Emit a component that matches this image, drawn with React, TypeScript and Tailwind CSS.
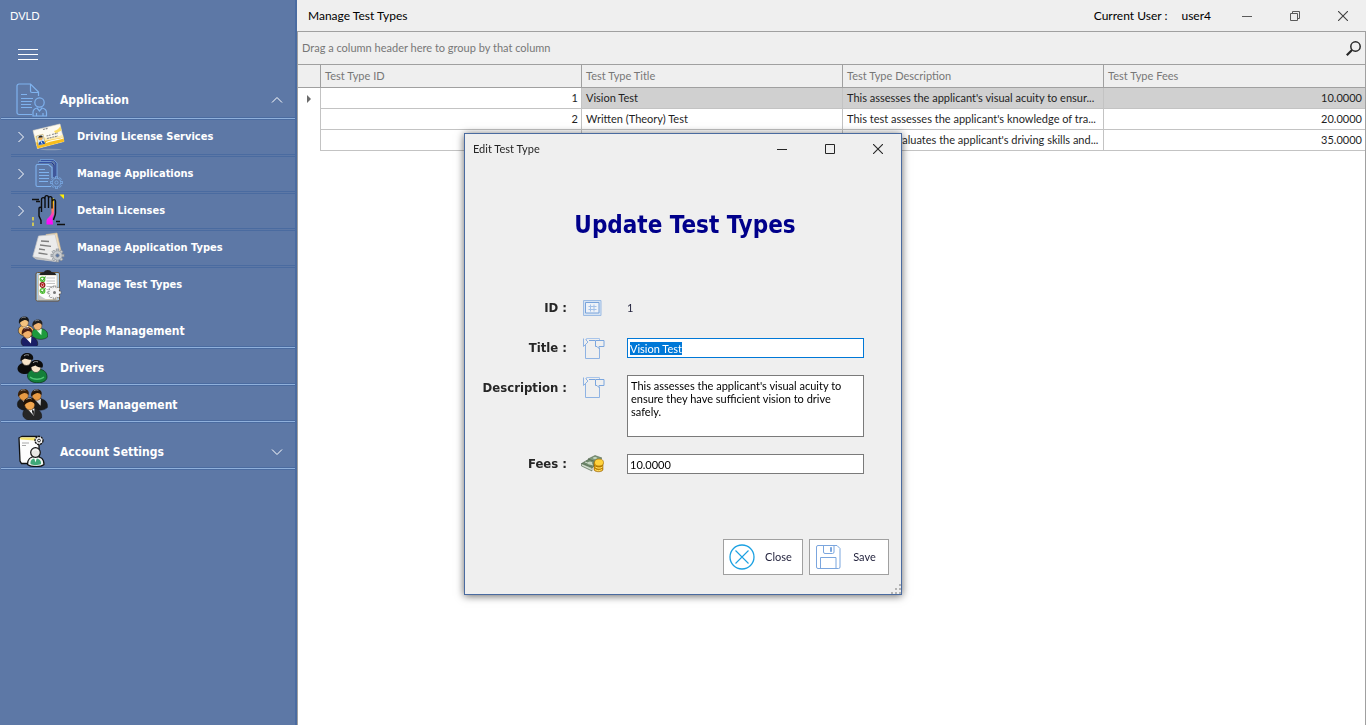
import { useEffect, useRef, useState } from "react";
import type { ReactNode } from "react";

/* ---------- sidebar icons ---------- */

function ApplicationIcon() {
  return (
    <svg width="32" height="34" viewBox="0 0 32 34" fill="none" stroke="#7fb2ee" strokeWidth="1.2">
      <path d="M16 31.500H3a2 2 0 0 1-2-2V3a2 2 0 0 1 2-2H14.500l8 8v4" />
      <path d="M14.500 1V8A1.500 1.500 0 0 0 16 9.500H22.500" />
      <path d="M5 11.500h6M5 15.500h12M5 18.500h11M5 21.500h10M5 24.500h11" />
      <circle cx="23.500" cy="19.500" r="4.700" />
      <path d="M17 33v-3.500c0-2.500 2-4 4-4.500l2.500 3 2.500-3c2.500.500 4.500 2 4.500 4.500V33z" />
      <path d="M20.500 30v3M27 30v3" />
    </svg>
  );
}

function LicenseCardIcon() {
  return (
    <svg width="34" height="30" viewBox="0 0 34 30">
      <ellipse cx="19" cy="27.500" rx="11" ry=".8" fill="#8b9bb8" />
      <path d="M1 8.500 28 2l4 17.500L5.500 26.500z" fill="#fdfaf0" stroke="#e3dccb" strokeWidth=".6" />
      <path d="M22 9c3-.8 5-2.500 6.500-5l1 4.500-6 3z" fill="#fbdb62" />
      <path d="M2.500 13.500c8 3 20 3 28.500-1l1 7L5.500 26.500z" fill="#fdebb0" />
      <path d="m4.200 20.500 27.200-5 .8 4L5.500 26.500z" fill="#f8bd1c" />
      <path d="M14 20.500c6-2.500 12-2.500 17.300-4.500" stroke="#fffbe8" strokeWidth="1.200" fill="none" />
      <path d="m4.500 14 6.500-1.700 2.300 9.500-6.800 2z" fill="#d6ecff" stroke="#caa24a" strokeWidth=".6" />
      <circle cx="8.500" cy="16.300" r="2.200" fill="#f0b55e" />
      <path d="M6.300 15.800c.3-2.600 4-3 4.600-.6z" fill="#2b2620" />
      <path d="M6.600 23c0-3 1.200-4 3-4.300 2-.2 3 1 3.500 3z" fill="#1e4fa9" />
      <path d="m8.800 18.800 1.400 3" stroke="#fff" strokeWidth=".9" />
      <path d="m11 7.500 5-1.200M14.500 14l4-1M20 12.500l6-1.500M15 16.500l11-2.600" stroke="#8b8b8b" strokeWidth="1.100" strokeDasharray="2 .7" />
    </svg>
  );
}

function Gear({ cx, cy, r, fill, stroke }: { cx: number; cy: number; r: number; fill: string; stroke: string }) {
  const spokes = [0, 45, 90, 135, 180, 225, 270, 315];
  return (
    <g transform={`translate(${cx} ${cy})`}>
      {spokes.map((a) => (
        <rect key={a} x={-r * 0.2} y={-r} width={r * 0.4} height={r * 0.5} fill={fill} stroke={stroke} strokeWidth=".7" transform={`rotate(${a})`} />
      ))}
      <circle r={r * 0.72} fill={fill} stroke={stroke} strokeWidth=".6" />
      <circle r={r * 0.27} fill="#5d78a6" stroke={stroke} strokeWidth=".7" />
    </g>
  );
}

function DocumentsGearIcon() {
  return (
    <svg width="28" height="30" viewBox="0 0 28 30" fill="none">
      <path d="M6 1.500h12.500l2.500 2.500v14M4 3.500h12.500l2.500 2.500V18" stroke="#22368f" strokeWidth="1" />
      <path d="M5 .8h13.500l3.500 3.500V17M3 2.800h13.500" stroke="#7fb2ee" strokeWidth=".8" />
      <path d="M16 27.500H2.500A1.500 1.500 0 0 1 1 26V7a1.500 1.500 0 0 1 1.500-1.500h11l3.500 3V19" stroke="#7fb2ee" strokeWidth="1.100" />
      <path d="M4 10.500h6M4 13.500h10M4 16.500h10M4 19.500h10M4 22.500h9" stroke="#7fb2ee" />
      <Gear cx={21.5} cy={23.500} r={5.800} fill="#5d78a6" stroke="#7fb2ee" />
    </svg>
  );
}

function HandIcon() {
  return (
    <svg width="34" height="34" viewBox="0 0 34 34" fill="none">
      <defs>
        <linearGradient id="palm" x1="0" y1="4" x2="0" y2="31" gradientUnits="userSpaceOnUse">
          <stop offset="0" stopColor="#ffe600" />
          <stop offset=".4" stopColor="#ff8a4a" />
          <stop offset=".75" stopColor="#f81ff0" />
          <stop offset="1" stopColor="#ff00ff" />
        </linearGradient>
      </defs>
      <path d="M19.500 4.500h2.500v16l-1.500 3.500.5 6.500h-6.500v-3.500c0-3 4-4 5-8z" fill="url(#palm)" />
      <path
        d="M9 30v-3.500L7 22v-7.500c0-1.700 2.500-1.700 2.500 0V18 5.500c0-2.500 3.500-2.500 3.500 0V14 3.500c0-2.500 3.500-2.500 3.500 0V14 4.500c0-2.500 3.500-2.500 3.500 0V14.500M20.500 7c.5-2 3-1.800 3 .5V19c0 3-1.500 4.500-2 7"
        stroke="#0c0c0c"
        strokeWidth="1.400"
      />
      <path d="M0 5.500h7M4 7.500h4M24 27.500h4M25 30.500h8" stroke="#111" strokeWidth="1.400" />
      <path d="M27.500.5h4.500v4.500z" fill="#ffee00" />
      <path d="M1 23v3.500M1 28.500V32" stroke="#e8d84a" strokeWidth="1.600" />
    </svg>
  );
}

function PapersGearIcon() {
  return (
    <svg width="34" height="32" viewBox="0 0 34 32">
      <path d="M14 2.500 25 1l4.500 20L15 27z" fill="#f4dcb4" stroke="#d4bd95" strokeWidth=".6" />
      <path d="M6.500 4 23 2.500l4.500 18c0 3-2 8-4 9L4 27 .8 24.500z" fill="#ebebeb" stroke="#c6c6c6" strokeWidth=".7" />
      <path d="M.8 24.500c4 .5 15 1.500 22.500 5L4 27z" fill="#bdbdbd" />
      <path d="m9 9 8 .5M8 13l11 1.300M7 17l6 .8M6.500 21l9 1.300" stroke="#7d7d7d" strokeWidth="1.300" />
      <Gear cx={25.500} cy={23.500} r={6.500} fill="#c8ccd0" stroke="#8b9096" />
    </svg>
  );
}

function ClipboardGearIcon() {
  return (
    <svg width="28" height="33" viewBox="0 0 28 33">
      <rect x="1" y="3.500" width="23.500" height="28.500" rx="1.500" fill="#a9cce8" stroke="#6b5236" strokeWidth="1" />
      <rect x="3.500" y="6" width="18.500" height="24.500" fill="#fdfdfd" stroke="#cbb083" strokeWidth=".6" />
      <path d="M4.500 6C4.500 3.500 8 3.500 9 3c1-2.800 6.500-2.800 7.500 0 1 .5 4.500.5 4.500 3z" fill="#222" />
      {[10.5, 16, 22].map((y, i) => (
        <g key={y}>
          <circle cx="7.500" cy={y} r="2.300" fill="#fff" stroke={i === 1 ? "#8e1616" : "#55c234"} strokeWidth="1.200" />
          <path d={i === 1 ? `m6.500 ${y - 1} 2 2m0-2-2 2` : `m6 ${y} 1.500 1.500 3-4.500`} stroke={i === 1 ? "#c01818" : "#3ea92e"} strokeWidth="1.100" fill="none" />
          <path d={`M11.500 ${y - 1.5}h8.500M11.500 ${y + 1.5}h8.500`} stroke="#c4c4c4" />
        </g>
      ))}
      <path d="M3.500 25.500c2 2 5 3 8 5h-8z" fill="#c9c9c9" />
      <g transform="translate(19.500 23.500)">
        {[0, 45, 90, 135].map((a) => (
          <rect key={a} x="-1.400" y="-6.500" width="2.800" height="13" fill="#f4f4f4" stroke="#555" strokeWidth=".5" transform={`rotate(${a})`} />
        ))}
        <circle r="4.800" fill="#f4f4f4" />
        <circle r="1.500" fill="#777" />
      </g>
    </svg>
  );
}

type PersonProps = { x: number; y: number; s: number; skin: string; hair: string; body: string; shirt: string };

function Person({ x, y, s, skin, hair, body, shirt }: PersonProps) {
  return (
    <g transform={`translate(${x} ${y}) scale(${s})`}>
      <path d="M-6 13C-8 8-5 5-2 4h6c5 1 9 4 8 10-4 4-14 4-18-1z" fill={body} stroke="#161616" strokeWidth=".6" />
      <path d="m-2 5 7-.5L4.500 12z" fill={shirt} />
      <ellipse cx="0" cy="0.500" rx="5" ry="5.500" fill={skin} stroke="#5c3a1a" strokeWidth=".5" transform="rotate(-15)" />
      <path d="M-5.800 2C-7-4-3-6.800 1-6.500 5-6.200 6.500-3 5.500 0 4-1.500 2-2.800 0-2c-2 .8-4 1.500-5.800 4z" fill={hair} />
      <path d="M-3-4.500C-1.500-6 1-5.800 2-5" stroke="#fff" strokeOpacity=".55" strokeWidth="1" fill="none" />
    </g>
  );
}

function PeopleIcon() {
  return (
    <svg width="32" height="32" viewBox="0 0 32 32">
      <Person x={8} y={7} s={0.85} skin="#f4c27e" hair="#171717" body="#f0b763" shirt="#fff8e6" />
      <Person x={21.500} y={10} s={0.85} skin="#f2b574" hair="#22201e" body="#1d9a3d" shirt="#d9ffe0" />
      <Person x={11} y={18} s={0.88} skin="#f0b06c" hair="#4a1d12" body="#1b1f66" shirt="#ffffff" />
    </svg>
  );
}

function DriversIcon() {
  return (
    <svg width="32" height="32" viewBox="0 0 32 32">
      <path d="M1.500 17c0-4 4-6.500 8-6.500s8 3 8 8c-4 5-15 5-16-1.500z" fill="#0b0b0b" />
      <ellipse cx="10.500" cy="8" rx="5" ry="5.500" fill="#f6e3c8" stroke="#222" strokeWidth=".6" />
      <path d="M4.500 9C4 3 8 .5 12 1c4 .5 6 3.500 5 6.500-4 1-8-1-8-1z" fill="#0d0d0d" />
      <path d="M11.500 24c0-4 3.500-7 9.500-7 6.500 0 10 3 10 8 0 8-19 8-19.500-1z" fill="#14803a" stroke="#082f14" strokeWidth=".7" />
      <ellipse cx="20" cy="15" rx="5" ry="5.500" fill="#f6e3c8" stroke="#222" strokeWidth=".6" />
      <path d="M14 15.500C13 10 17 7.500 21 8c5 .5 7 4 5.500 7.500-4 .5-7-2-7-2z" fill="#0b0b0b" />
      <path d="M8 4c1.500-1.500 3.500-1.500 5-.8M17 10.800c1.500-1.500 3.500-1.500 5-.8" stroke="#9a9a9a" fill="none" />
      <path d="M14 25c3 3 11 3 14 0" stroke="#4fc474" strokeWidth="1.300" fill="none" />
    </svg>
  );
}

function UsersIcon() {
  return (
    <svg width="32" height="33" viewBox="0 0 32 33">
      <Person x={20.500} y={7} s={0.9} skin="#e89a43" hair="#241608" body="#1b1b1b" shirt="#cfcfcf" />
      <Person x={7.500} y={7} s={0.92} skin="#e89a43" hair="#3a2008" body="#1b1b1b" shirt="#e8e8e8" />
      <Person x={13.500} y={16} s={1} skin="#f0a64f" hair="#241304" body="#262626" shirt="#f3f3f3" />
      <path d="m16.500 21 1.500 2.500-.5 4.500-1.500-4.500z" fill="#111" />
    </svg>
  );
}

function AccountIcon() {
  return (
    <svg width="28" height="33" viewBox="0 0 28 33">
      <path d="M1 3 4 1.500h17v22l-2 5H3.500L2 26z" fill="#fdfdfd" stroke="#111" strokeWidth="1.300" />
      <path d="M2 2.500h15v3L2.500 4.500z" fill="#f4e36b" />
      <path d="M4 8h7M4 10.500h4" stroke="#a8a8a8" />
      <circle cx="21" cy="5.500" r="4" fill="#f5f5f5" stroke="#111" strokeWidth="1.300" strokeDasharray="2.200 .7" />
      <circle cx="21" cy="5.500" r="1.400" fill="#fff" stroke="#111" strokeWidth=".9" />
      <path d="M9.500 29.500c0-6 3-8 8-8s8.500 2 8.500 8c-3 2.800-13 2.800-16.500 0z" fill="#eef4f0" stroke="#111" strokeWidth="1.200" />
      <path d="M12.500 29c-.5-4 2-5.500 5-5.500s6 1.500 5.500 5.500c-3 1.500-8 1.500-10.500 0z" fill="#3fa878" />
      <path d="m16 22.500 1.500 5 1.500-5z" fill="#fff" />
      <circle cx="17.500" cy="17.500" r="4.800" fill="#e8e8e4" stroke="#111" strokeWidth="1.200" />
      <path d="M14.500 16.500c1-2 4-2.500 5.500-.5" stroke="#fff" fill="none" />
    </svg>
  );
}

/* ---------- form icons ---------- */

function IdIcon() {
  return (
    <svg width="20" height="16" viewBox="0 0 20 16" fill="none">
      <path d="M.5.500h17.500v15H.5z" fill="#d6e3f3" stroke="#9dbce4" />
      <path d="M2.500 2.500h13.500v10.500h-13.500z" fill="#eef2f8" stroke="#78a3da" />
      <path d="M7.500 4.500v7M11 4.500v7M5.500 6.500h8M5.500 9.500h8" stroke="#a3c1e8" />
    </svg>
  );
}

function TextTagIcon() {
  return (
    <svg width="22" height="22" viewBox="0 0 22 22" fill="none" stroke="#7ba6de" strokeWidth="1">
      <path d="M3.500 3.500V1.500h13v2" stroke="#a9c5ea" />
      <path d="M.5 1.500v8L3 7l2-2-2.500-2.500" stroke="#8fb3e3" />
      <path d="M2.500 8v13.500h14V11" stroke="#8fb3e3" />
      <path d="M6 3.500h6" />
      <path d="M12.500 3.500h8.500v6h-5v2l-2-2h-1.500z" fill="#efefef" />
    </svg>
  );
}

function MoneyIcon() {
  return (
    <svg width="24" height="20" viewBox="0 0 24 20">
      <path d="M.5 9.500 8 5l10 3-7 6z" fill="#6f8a6c" stroke="#42573f" strokeWidth=".5" />
      <path d="M.5 9.500v2.500l10.500 5v-3.500z" fill="#a9bba5" stroke="#42573f" strokeWidth=".5" />
      <path d="m7 5 7-3.500L21 4l-5 4z" fill="#7f9a7b" stroke="#42573f" strokeWidth=".5" />
      <path d="m1 11 10 4.500M4 8l8 3" stroke="#e7ede5" strokeWidth=".8" />
      <ellipse cx="9" cy="9" rx="2.500" ry="1.500" fill="#c6d6c1" />
      <ellipse cx="14" cy="4" rx="2" ry="1" fill="#c6d6c1" />
      {[16.5, 14, 11.5].map((y) => (
        <path key={y} d={`M13 ${y - 3}v2c0 3 9 3 9 0v-2z`} fill="#d99a0c" stroke="#8a5a00" strokeWidth=".5" />
      ))}
      <ellipse cx="18" cy="8.500" rx="4.500" ry="3.500" fill="#ffd23c" stroke="#a36d00" strokeWidth=".6" />
      <path d="M14.500 13c2 1.500 5 1.500 7 0M14 15.500c2 1.500 5 1.500 7 0" stroke="#ffe06a" fill="none" />
    </svg>
  );
}

/* ---------- window glyphs ---------- */

function CloseGlyph() {
  return (
    <svg width="10" height="10" viewBox="0 0 10 10" stroke="currentColor" strokeWidth="1.100">
      <path d="m0 0 10 10M10 0 0 10" />
    </svg>
  );
}

function MinimizeGlyph() {
  return (
    <svg width="10" height="10" viewBox="0 0 10 10" stroke="currentColor">
      <path d="M0 5.500h10" />
    </svg>
  );
}

function MaximizeGlyph() {
  return (
    <svg width="10" height="10" viewBox="0 0 10 10" fill="none" stroke="currentColor">
      <path d="M.5.500h9v9h-9z" />
    </svg>
  );
}

function RestoreGlyph() {
  return (
    <svg width="10" height="10" viewBox="0 0 10 10" fill="none" stroke="currentColor">
      <path d="M.5 2.500h7v7h-7zM2.500 2.500v-2h7v7h-2" />
    </svg>
  );
}

function Chevron({ dir }: { dir: "up" | "down" | "right" }) {
  const path = dir === "up" ? "m1 8.500 5-5 5 5" : dir === "down" ? "m1 3.500 5 5 5-5" : "m3.500 1 5 5-5 5";
  return (
    <svg width="12" height="12" viewBox="0 0 12 12" fill="none" stroke="#fff">
      <path d={path} />
    </svg>
  );
}

/* ---------- sidebar ---------- */

const boldFace = "font-['DejaVu_Sans_Condensed','DejaVu_Sans',sans-serif] font-bold";

function SubItem({ icon, label, expandable, last }: { icon: ReactNode; label: string; expandable?: boolean; last?: boolean }) {
  return (
    <li className="flex h-[37px] flex-col">
      <button className="flex min-h-0 flex-1 items-center pl-[15px] text-left">
        <span className="w-4 shrink-0">{expandable && <Chevron dir="right" />}</span>
        <span className="flex w-[36px] shrink-0 justify-center">{icon}</span>
        <span className={`${boldFace} pt-px pl-[10px] text-[11px] text-white`}>{label}</span>
      </button>
      <span className={last ? "h-[3px]" : "ml-[11px] h-[3px] border-y border-[#4a6ba0]"} />
    </li>
  );
}

function MainItem({ icon, label, chevron }: { icon: ReactNode; label: string; chevron?: "up" | "down" }) {
  return (
    <div className="flex h-[37px] flex-col">
      <button className="flex min-h-0 flex-1 items-center pr-3 pl-[14px] text-left">
        <span className="flex w-9 shrink-0 justify-center">{icon}</span>
        <span className={`${boldFace} flex-1 pl-[10px] text-[12px] text-white`}>{label}</span>
        {chevron && <Chevron dir={chevron} />}
      </button>
      <span className="ml-px h-[3px] border-y border-[#4a6ba0] bg-[#8fb0dc]" />
    </div>
  );
}

function GroupItem({ icon, label, chevron }: { icon: ReactNode; label: string; chevron?: "up" | "down" }) {
  return (
    <div className="flex h-[37px] flex-col">
      <button className="flex min-h-0 flex-1 items-center pt-[3px] pr-3 pl-[14px] text-left">
        <span className="flex w-9 shrink-0 justify-center">{icon}</span>
        <span className={`${boldFace} flex-1 pl-[10px] text-[12px] text-white`}>{label}</span>
        {chevron && <Chevron dir={chevron} />}
      </button>
      <span className="ml-px h-[3px] border-y border-[#4a6ba0] bg-[#8fb0dc]" />
    </div>
  );
}

function Sidebar() {
  return (
    <nav className="w-[297px] shrink-0 border-r-2 border-[#4a6ba0] bg-[#5d78a6]">
      <div className="flex h-8 items-center pl-[10px] text-[11px] text-white">DVLD</div>
      <div className="h-[51px] pt-[17px] pl-[18px]">
        <button aria-label="Toggle menu" className="flex w-5 flex-col gap-1">
          <span className="h-px w-full bg-white" />
          <span className="h-px w-full bg-white" />
          <span className="h-px w-full bg-white" />
        </button>
      </div>
      <MainItem icon={<ApplicationIcon />} label="Application" chevron="up" />
      <ul className="pb-[7px]">
        <SubItem icon={<LicenseCardIcon />} label="Driving License Services" expandable />
        <SubItem icon={<DocumentsGearIcon />} label="Manage Applications" expandable />
        <SubItem icon={<HandIcon />} label="Detain Licenses" expandable />
        <SubItem icon={<PapersGearIcon />} label="Manage Application Types" />
        <SubItem icon={<ClipboardGearIcon />} label="Manage Test Types" last />
      </ul>
      <GroupItem icon={<PeopleIcon />} label="People Management" />
      <GroupItem icon={<DriversIcon />} label="Drivers" />
      <GroupItem icon={<UsersIcon />} label="Users Management" />
      <div className="pt-[10px]">
        <GroupItem icon={<AccountIcon />} label="Account Settings" chevron="down" />
      </div>
    </nav>
  );
}

/* ---------- grid ---------- */

const testTypes = [
  {
    id: 1,
    title: "Vision Test",
    summary: "This assesses the applicant's visual acuity to ensur...",
    description: "This assesses the applicant's visual acuity to ensure they have sufficient vision to drive safely.",
    fees: "10.0000",
  },
  {
    id: 2,
    title: "Written (Theory) Test",
    summary: "This test assesses the applicant's knowledge of tra...",
    description: "This test assesses the applicant's knowledge of traffic rules.",
    fees: "20.0000",
  },
  {
    id: 3,
    title: "Practical (Street) Test",
    summary: "This test evaluates the applicant's driving skills and...",
    description: "This test evaluates the applicant's driving skills and ability.",
    fees: "35.0000",
  },
];

function TestTypesTable() {
  const head = "h-[23px] border-r border-b border-[#a0a0a0] px-1 py-0 text-left font-normal text-[#777]";
  return (
    <table className="w-full table-fixed border-separate border-spacing-0 text-[11px] text-[#1f1f1f]">
      <thead className="bg-[#efefef]">
        <tr>
          <th className="h-[23px] w-[23px] border-r border-b border-[#a0a0a0] p-0" aria-label="Row indicator" />
          <th className={head}>Test Type ID</th>
          <th className={head}>Test Type Title</th>
          <th className={head}>Test Type Description</th>
          <th className="h-[23px] border-b border-[#a0a0a0] px-1 py-0 text-left font-normal text-[#777]">Test Type Fees</th>
        </tr>
      </thead>
      <tbody>
        {testTypes.map((t, i) => {
          const tone = i === 0 ? "bg-[#d0d0d0]" : "bg-white";
          return (
            <tr key={t.id}>
              <td className="h-[21px] border-r border-[#c3c3c3] p-0">
                {i === 0 && (
                  <svg className="ml-[9px]" width="4" height="8" viewBox="0 0 4 8" fill="#6b6b6b">
                    <path d="M0 0v8l4-4z" />
                  </svg>
                )}
              </td>
              <td className="h-[21px] border-r border-b border-[#c3c3c3] px-[3px] py-0 text-right">{t.id}</td>
              <td className={`${tone} h-[21px] border-r border-b border-[#c3c3c3] px-1 py-0 whitespace-nowrap`}>{t.title}</td>
              <td className={`${tone} h-[21px] overflow-hidden border-r border-b border-[#c3c3c3] px-1 py-0 whitespace-nowrap`} title={t.description}>
                {t.summary}
              </td>
              <td className={`${tone} h-[21px] border-b border-[#c3c3c3] px-[3px] py-0 text-right`}>{t.fees}</td>
            </tr>
          );
        })}
      </tbody>
    </table>
  );
}

/* ---------- dialog ---------- */

function EditDialog() {
  const titleRef = useRef<HTMLInputElement>(null);
  const [title, setTitle] = useState(testTypes[0].title);
  const [description, setDescription] = useState(testTypes[0].description);
  const [fees, setFees] = useState(testTypes[0].fees);

  useEffect(() => {
    titleRef.current?.focus();
    titleRef.current?.select();
  }, []);

  const label = `${boldFace} flex h-5 items-center justify-end text-[13px] whitespace-pre text-[#262626]`;

  return (
    <section
      role="dialog"
      aria-labelledby="dialog-title"
      className="relative w-[438px] border border-[#4a6ba0] bg-[#efefef] shadow-[0_1px_8px_rgba(0,0,0,0.6)]"
    >
      <header className="flex h-[30px] items-center pl-2 text-[#262626]">
        <h2 id="dialog-title" className="flex-1 text-[11px]">Edit Test Type</h2>
        <div className="-mr-px flex h-full">
          <button aria-label="Minimize" className="flex h-full w-12 items-center justify-center"><MinimizeGlyph /></button>
          <button aria-label="Maximize" className="flex h-full w-12 items-center justify-center"><MaximizeGlyph /></button>
          <button aria-label="Close window" className="flex h-full w-12 items-center justify-center"><CloseGlyph /></button>
        </div>
      </header>

      <h1 className={`${boldFace} pt-[45px] pl-1 text-center text-[24px] leading-8 text-[#00008b]`}>Update Test Types</h1>

      <form className="pt-[57px]" onSubmit={(e) => e.preventDefault()}>
        <div className="grid grid-cols-[102px_44px_237px] gap-x-2 gap-y-[17px]">
          <span className={`${label} mb-[3px]`}>ID :</span>
          <span className="flex h-5 items-center pl-2"><IdIcon /></span>
          <output className="flex h-5 items-center text-[11px] text-[#262640]">1</output>

          <label htmlFor="title" className={label}>Title :</label>
          <span className="flex h-5 items-center pl-2"><TextTagIcon /></span>
          <input
            id="title"
            ref={titleRef}
            value={title}
            onChange={(e) => setTitle(e.target.value)}
            className="h-5 w-full border border-[#0078d7] bg-white px-[2px] text-[11px] leading-[14px] outline-none selection:bg-[#0078d7] selection:text-white"
          />

          <label htmlFor="description" className={`${label} mt-[3px]`}>Description :</label>
          <span className="flex h-6 items-center pl-2"><TextTagIcon /></span>
          <textarea
            id="description"
            value={description}
            onChange={(e) => setDescription(e.target.value)}
            className="h-[62px] w-full resize-none border border-[#7a7a7a] bg-white px-[3px] py-[3px] text-[11px] leading-[13px] outline-none"
          />

          <label htmlFor="fees" className={label}>Fees :</label>
          <span className="flex h-5 items-center pl-[6px]"><MoneyIcon /></span>
          <input
            id="fees"
            value={fees}
            onChange={(e) => setFees(e.target.value)}
            className="h-5 w-full border border-[#7a7a7a] bg-white px-[2px] text-[11px] leading-[14px] outline-none"
          />
        </div>

        <div className="flex justify-end gap-[6px] pt-[65px] pr-3 pb-[19px]">
          <button type="button" className="flex h-9 w-20 items-center border border-[#a0a0a0] bg-white pl-[5px] text-[11px] text-[#262640]">
            <svg width="26" height="26" viewBox="0 0 26 26" fill="none" stroke="#1ba1e2">
              <circle cx="13" cy="13" r="12" strokeWidth="1.300" />
              <path d="m6.500 6.500 13 13M19.500 6.500l-13 13" strokeWidth="1.100" />
            </svg>
            <span className="flex-1 text-center">Close</span>
          </button>
          <button type="submit" className="flex h-9 w-20 items-center border border-[#a0a0a0] bg-white pl-[6px] text-[11px] text-[#262640]">
            <svg width="25" height="26" viewBox="0 0 25 26" fill="none" stroke="#7ba6de">
              <path d="M2 1.500h19l3 3V23a1.500 1.500 0 0 1-1.500 1.500H2A1.500 1.500 0 0 1 .5 23V3A1.500 1.500 0 0 1 2 1.500z" />
              <path d="M7.500 1.500V8A1.500 1.500 0 0 0 9 9.500h7.500A1.500 1.500 0 0 0 18 8V1.500" />
              <path d="M14.500 3.500h1v4h-1z" fill="#7ba6de" />
              <path d="M4.500 24.500v-11h15.500v11" />
            </svg>
            <span className="flex-1 text-center">Save</span>
          </button>
        </div>
      </form>

      <svg className="absolute right-0 bottom-0" width="10" height="10" viewBox="0 0 10 10" fill="#b4b4b4">
        <path d="M8 0h2v2H8zM8 4h2v2H8zM4 4h2v2H4zM8 8h2v2H8zM4 8h2v2H4zM0 8h2v2H0z" />
      </svg>
    </section>
  );
}

export default function App() {
  return (
    <div className="flex min-h-screen bg-white font-['Lato','DejaVu_Sans_Condensed',sans-serif]">
      <Sidebar />
      <main className="flex min-w-0 flex-1 flex-col">
        <header className="flex h-[31px] items-center bg-[#efefef] pl-[11px] text-[12px] text-black">
          <h1 className="flex-1">Manage Test Types</h1>
          <span>Current User :</span>
          <span className="pr-3 pl-[14px]">user4</span>
          <div className="-mr-px flex h-full">
            <button aria-label="Minimize window" className="flex h-full w-12 items-center justify-center text-[#5a5a5a]"><MinimizeGlyph /></button>
            <button aria-label="Restore window" className="flex h-full w-12 items-center justify-center text-[#5a5a5a]"><RestoreGlyph /></button>
            <button aria-label="Close application" className="flex h-full w-12 items-center justify-center text-[#404040]"><CloseGlyph /></button>
          </div>
        </header>
        <div className="flex-1 border-x border-t border-[#a0a0a0] bg-white">
          <div className="flex h-[33px] items-center justify-between border-b border-[#a0a0a0] bg-[#efefef] px-1 text-[11px] text-[#777]">
            <span>Drag a column header here to group by that column</span>
            <button aria-label="Search">
              <svg width="15" height="15" viewBox="0 0 15 15" fill="none" stroke="#262626">
                <circle cx="9.500" cy="5.500" r="4.700" strokeWidth="1.500" />
                <path d="M6 9 .8 14.200" strokeWidth="2.200" />
              </svg>
            </button>
          </div>
          <TestTypesTable />
        </div>
      </main>
      <div className="pointer-events-none fixed inset-0 flex items-start justify-center pt-[133px]">
        <div className="pointer-events-auto">
          <EditDialog />
        </div>
      </div>
    </div>
  );
}
